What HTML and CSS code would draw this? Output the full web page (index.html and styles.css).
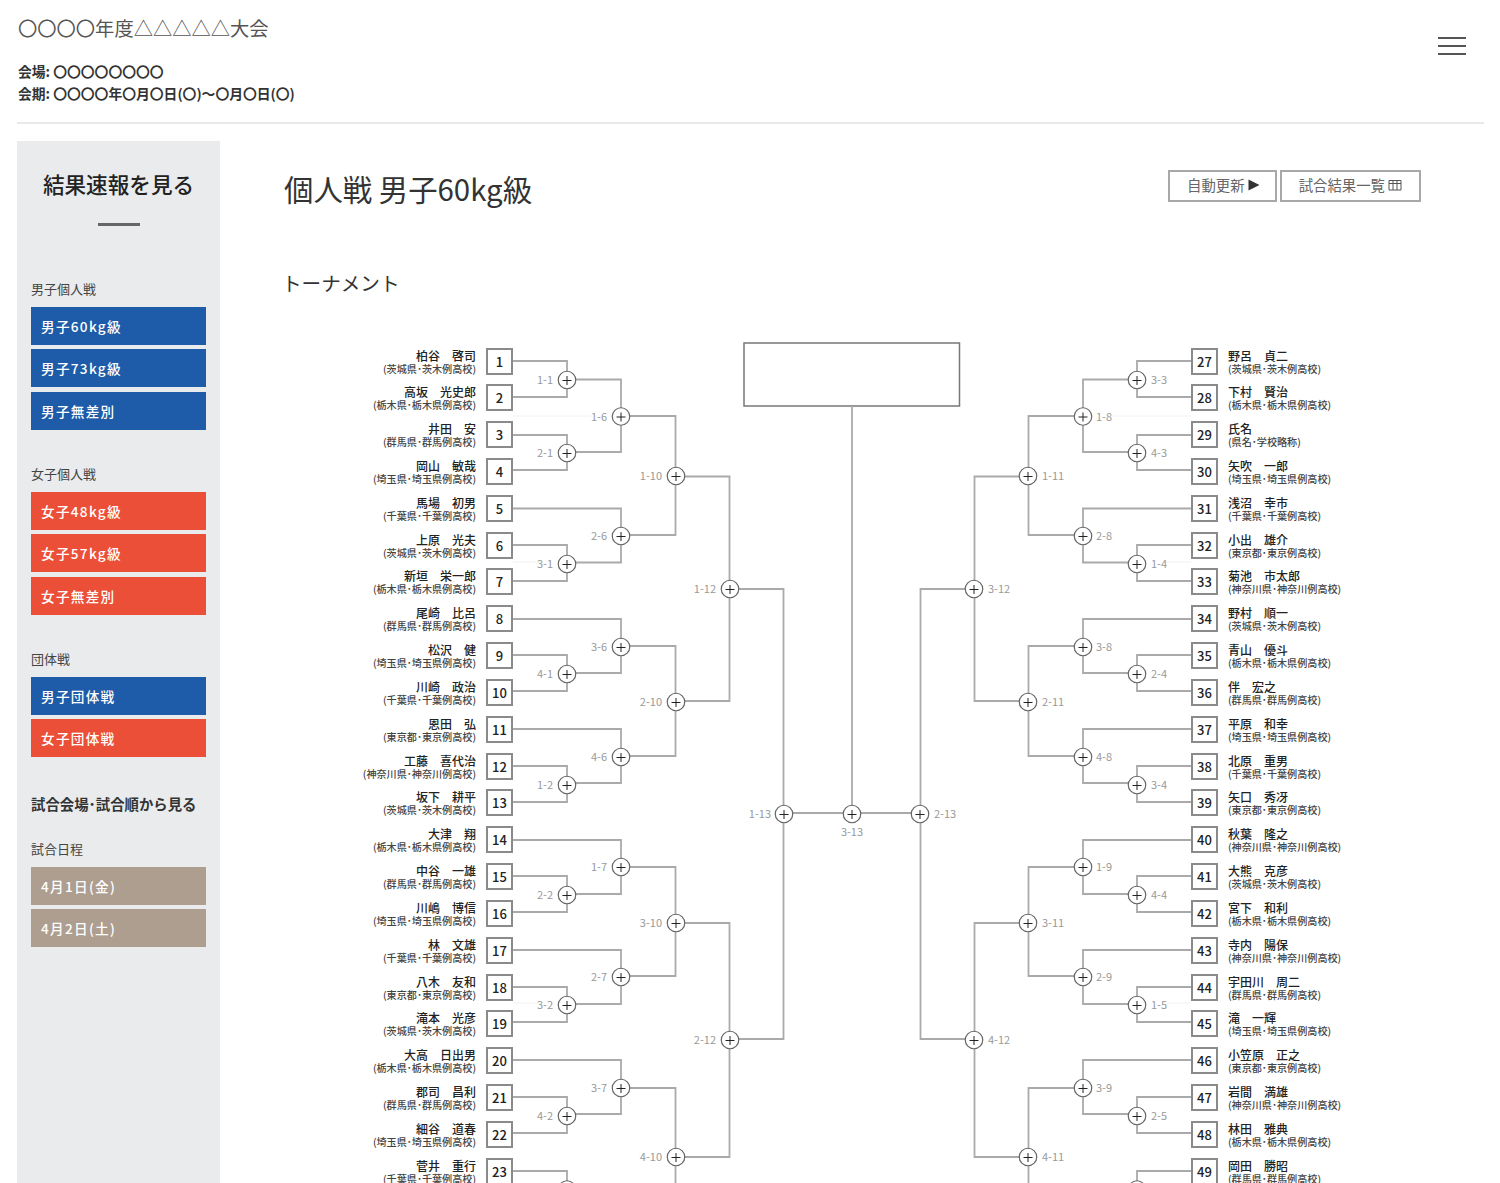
FILE: index.html
```html
<!DOCTYPE html>
<html lang="ja">
<head>
  <meta charset="UTF-8">
  <meta name="viewport" content="width=device-width, initial-scale=1.0">
  <title>〇〇〇〇年度△△△△△大会</title>
  <link rel="stylesheet" href="styles.css">
</head>
<body>
  <header class="site-header">
    <div>
      <p class="site-title">〇〇〇〇年度△△△△△大会</p>
      <p class="site-info">会場: 〇〇〇〇〇〇〇〇</p>
      <p class="site-info">会期: 〇〇〇〇年〇月〇日(〇)～〇月〇日(〇)</p>
    </div>
    <div class="menu-icon"><span></span><span></span><span></span></div>
  </header>

  <div class="layout">
    <aside class="sidebar">
      <h2 class="side-title">結果速報を見る</h2>
      <div class="side-rule"></div>

      <h3 class="side-label">男子個人戦</h3>
      <a class="side-btn blue">男子60kg級</a>
      <a class="side-btn blue">男子73kg級</a>
      <a class="side-btn blue">男子無差別</a>

      <h3 class="side-label">女子個人戦</h3>
      <a class="side-btn red">女子48kg級</a>
      <a class="side-btn red">女子57kg級</a>
      <a class="side-btn red">女子無差別</a>

      <h3 class="side-label">団体戦</h3>
      <a class="side-btn blue">男子団体戦</a>
      <a class="side-btn red">女子団体戦</a>

      <h2 class="side-subtitle">試合会場･試合順から見る</h2>
      <h3 class="side-label date-label">試合日程</h3>
      <a class="side-btn brown">4月1日(金)</a>
      <a class="side-btn brown">4月2日(土)</a>
    </aside>

    <main class="main">
      <div class="page-head">
        <h1>個人戦 男子60kg級</h1>
        <div class="head-buttons">
          <a class="head-btn">自動更新
            <svg width="12" height="12" viewBox="0 0 12 12"><polygon points="0.5,0.5 11.5,6 0.5,11.5" fill="#333"/></svg>
          </a>
          <a class="head-btn">試合結果一覧
            <svg width="14" height="12" viewBox="0 0 14 12" fill="none" stroke="#555"><path d="M1 1.5H13V11H1ZM1 4.5H13M5 1.5V11M9 1.5V11"/></svg>
          </a>
        </div>
      </div>

      <h2 class="section-title">トーナメント</h2>

      <div class="bracket">
        <div class="entries left">
          <div class="entry"><div class="who"><b>柏谷　啓司</b><small>(茨城県･茨木例高校)</small></div><div class="seed">1</div></div>
          <div class="entry"><div class="who"><b>高坂　光史郎</b><small>(栃木県･栃木県例高校)</small></div><div class="seed">2</div></div>
          <div class="entry"><div class="who"><b>井田　安</b><small>(群馬県･群馬例高校)</small></div><div class="seed">3</div></div>
          <div class="entry"><div class="who"><b>岡山　敏哉</b><small>(埼玉県･埼玉県例高校)</small></div><div class="seed">4</div></div>
          <div class="entry"><div class="who"><b>馬場　初男</b><small>(千葉県･千葉例高校)</small></div><div class="seed">5</div></div>
          <div class="entry"><div class="who"><b>上原　光夫</b><small>(茨城県･茨木例高校)</small></div><div class="seed">6</div></div>
          <div class="entry"><div class="who"><b>新垣　栄一郎</b><small>(栃木県･栃木県例高校)</small></div><div class="seed">7</div></div>
          <div class="entry"><div class="who"><b>尾崎　比呂</b><small>(群馬県･群馬例高校)</small></div><div class="seed">8</div></div>
          <div class="entry"><div class="who"><b>松沢　健</b><small>(埼玉県･埼玉県例高校)</small></div><div class="seed">9</div></div>
          <div class="entry"><div class="who"><b>川崎　政治</b><small>(千葉県･千葉例高校)</small></div><div class="seed">10</div></div>
          <div class="entry"><div class="who"><b>恩田　弘</b><small>(東京都･東京例高校)</small></div><div class="seed">11</div></div>
          <div class="entry"><div class="who"><b>工藤　喜代治</b><small>(神奈川県･神奈川例高校)</small></div><div class="seed">12</div></div>
          <div class="entry"><div class="who"><b>坂下　耕平</b><small>(茨城県･茨木例高校)</small></div><div class="seed">13</div></div>
          <div class="entry"><div class="who"><b>大津　翔</b><small>(栃木県･栃木県例高校)</small></div><div class="seed">14</div></div>
          <div class="entry"><div class="who"><b>中谷　一雄</b><small>(群馬県･群馬例高校)</small></div><div class="seed">15</div></div>
          <div class="entry"><div class="who"><b>川嶋　博信</b><small>(埼玉県･埼玉県例高校)</small></div><div class="seed">16</div></div>
          <div class="entry"><div class="who"><b>林　文雄</b><small>(千葉県･千葉例高校)</small></div><div class="seed">17</div></div>
          <div class="entry"><div class="who"><b>八木　友和</b><small>(東京都･東京例高校)</small></div><div class="seed">18</div></div>
          <div class="entry"><div class="who"><b>滝本　光彦</b><small>(茨城県･茨木例高校)</small></div><div class="seed">19</div></div>
          <div class="entry"><div class="who"><b>大高　日出男</b><small>(栃木県･栃木県例高校)</small></div><div class="seed">20</div></div>
          <div class="entry"><div class="who"><b>郡司　昌利</b><small>(群馬県･群馬例高校)</small></div><div class="seed">21</div></div>
          <div class="entry"><div class="who"><b>細谷　道春</b><small>(埼玉県･埼玉県例高校)</small></div><div class="seed">22</div></div>
          <div class="entry"><div class="who"><b>菅井　重行</b><small>(千葉県･千葉例高校)</small></div><div class="seed">23</div></div>
        </div>

        <svg class="tree" width="678" height="860" viewBox="513 340 678 860">
          <defs>
            <g id="node">
              <circle r="8.75" fill="#fff" stroke="#666" stroke-width="1.2"/>
              <path d="M-4.5 0.5H4.5M0 -4V5" stroke="#222" stroke-width="1" fill="none"/>
            </g>
            <g id="half">
              <path class="faint" d="M513 416H592M513 562H540M513 1003H540"/>
              <path class="line" d="M513 361H567V380M513 397H567V380M567 379.5H621V416M513 435H567V453M513 470H567V453M567 452H621V416M621 416H675.5V476M513 508.5H621V536M513 545H567V564M513 581H567V564M567 562.5H621V536M621 535H675.5V476M676 476.5H729.5V589"/>
              <path class="line" d="M513 619H621V647M513 655H567V674M513 691H567V674M567 673H621V647M621 646H675.5V702M513 729H621V757M513 766H567V785M513 802H567V785M567 783H621V757M621 756H675.5V702M676 701H729.5V589M730 589H783.5V814"/>
              <path class="line" d="M513 840H621V867M513 876H567V895M513 912H567V895M567 894H621V867M621 867H675.5V923M513 950H621V977M513 987H567V1005M513 1022H567V1005M567 1004H621V977M621 976H675.5V923M676 923H729.5V1040M676 1157H729.5V1040M730 1039H783.5V814"/>
              <path class="line" d="M513 1060H621V1088M513 1097H567V1116M513 1133H567V1116M567 1114H621V1088M621 1088H675.5V1200M513 1171H567V1200"/>
              <use href="#node" x="567" y="380"/>
              <use href="#node" x="621" y="416.5"/>
              <use href="#node" x="567" y="453"/>
              <use href="#node" x="676" y="476"/>
              <use href="#node" x="621" y="536"/>
              <use href="#node" x="567" y="564"/>
              <use href="#node" x="730" y="589"/>
              <use href="#node" x="621" y="647"/>
              <use href="#node" x="567" y="674"/>
              <use href="#node" x="676" y="702"/>
              <use href="#node" x="621" y="757"/>
              <use href="#node" x="567" y="785"/>
              <use href="#node" x="784" y="814"/>
              <use href="#node" x="621" y="867"/>
              <use href="#node" x="567" y="895"/>
              <use href="#node" x="676" y="923"/>
              <use href="#node" x="621" y="977"/>
              <use href="#node" x="567" y="1005"/>
              <use href="#node" x="730" y="1040"/>
              <use href="#node" x="621" y="1088"/>
              <use href="#node" x="567" y="1116"/>
              <use href="#node" x="676" y="1157"/>
              <use href="#node" x="567" y="1189.5"/>
            </g>
          </defs>

          <rect class="final" x="744" y="343" width="215.5" height="63"/>
          <path class="line" d="M852 406V814M784 813H920"/>
          <use href="#half"/>
          <use href="#half" transform="translate(1704 0) scale(-1 1)"/>
          <use href="#node" x="852" y="814"/>

          <g class="labels left-labels">
            <text x="553" y="384">1-1</text>
            <text x="607" y="420.5">1-6</text>
            <text x="553" y="457">2-1</text>
            <text x="662" y="480">1-10</text>
            <text x="607" y="540">2-6</text>
            <text x="553" y="568">3-1</text>
            <text x="716" y="593">1-12</text>
            <text x="607" y="651">3-6</text>
            <text x="553" y="678">4-1</text>
            <text x="662" y="706">2-10</text>
            <text x="607" y="761">4-6</text>
            <text x="553" y="789">1-2</text>
            <text x="771" y="818">1-13</text>
            <text x="607" y="871">1-7</text>
            <text x="553" y="899">2-2</text>
            <text x="662" y="927">3-10</text>
            <text x="607" y="981">2-7</text>
            <text x="553" y="1009">3-2</text>
            <text x="716" y="1044">2-12</text>
            <text x="607" y="1092">3-7</text>
            <text x="553" y="1120">4-2</text>
            <text x="662" y="1161">4-10</text>
          </g>
          <text class="labels mid-label" x="852" y="835.5">3-13</text>
          <g class="labels">
            <text x="934" y="818">2-13</text>
            <text x="1151" y="384">3-3</text>
            <text x="1096" y="420.5">1-8</text>
            <text x="1151" y="457">4-3</text>
            <text x="1042" y="480">1-11</text>
            <text x="1096" y="540">2-8</text>
            <text x="1151" y="568">1-4</text>
            <text x="988" y="593">3-12</text>
            <text x="1096" y="651">3-8</text>
            <text x="1151" y="678">2-4</text>
            <text x="1042" y="706">2-11</text>
            <text x="1096" y="761">4-8</text>
            <text x="1151" y="789">3-4</text>
            <text x="1096" y="871">1-9</text>
            <text x="1151" y="899">4-4</text>
            <text x="1042" y="927">3-11</text>
            <text x="1096" y="981">2-9</text>
            <text x="1151" y="1009">1-5</text>
            <text x="988" y="1044">4-12</text>
            <text x="1096" y="1092">3-9</text>
            <text x="1151" y="1120">2-5</text>
            <text x="1042" y="1161">4-11</text>
          </g>
        </svg>

        <div class="entries right">
          <div class="entry"><div class="seed">27</div><div class="who"><b>野呂　貞二</b><small>(茨城県･茨木例高校)</small></div></div>
          <div class="entry"><div class="seed">28</div><div class="who"><b>下村　賢治</b><small>(栃木県･栃木県例高校)</small></div></div>
          <div class="entry"><div class="seed">29</div><div class="who"><b>氏名</b><small>(県名･学校略称)</small></div></div>
          <div class="entry"><div class="seed">30</div><div class="who"><b>矢吹　一郎</b><small>(埼玉県･埼玉県例高校)</small></div></div>
          <div class="entry"><div class="seed">31</div><div class="who"><b>浅沼　幸市</b><small>(千葉県･千葉例高校)</small></div></div>
          <div class="entry"><div class="seed">32</div><div class="who"><b>小出　雄介</b><small>(東京都･東京例高校)</small></div></div>
          <div class="entry"><div class="seed">33</div><div class="who"><b>菊池　市太郎</b><small>(神奈川県･神奈川例高校)</small></div></div>
          <div class="entry"><div class="seed">34</div><div class="who"><b>野村　順一</b><small>(茨城県･茨木例高校)</small></div></div>
          <div class="entry"><div class="seed">35</div><div class="who"><b>青山　優斗</b><small>(栃木県･栃木県例高校)</small></div></div>
          <div class="entry"><div class="seed">36</div><div class="who"><b>伴　宏之</b><small>(群馬県･群馬例高校)</small></div></div>
          <div class="entry"><div class="seed">37</div><div class="who"><b>平原　和幸</b><small>(埼玉県･埼玉県例高校)</small></div></div>
          <div class="entry"><div class="seed">38</div><div class="who"><b>北原　重男</b><small>(千葉県･千葉例高校)</small></div></div>
          <div class="entry"><div class="seed">39</div><div class="who"><b>矢口　秀冴</b><small>(東京都･東京例高校)</small></div></div>
          <div class="entry"><div class="seed">40</div><div class="who"><b>秋葉　隆之</b><small>(神奈川県･神奈川例高校)</small></div></div>
          <div class="entry"><div class="seed">41</div><div class="who"><b>大熊　克彦</b><small>(茨城県･茨木例高校)</small></div></div>
          <div class="entry"><div class="seed">42</div><div class="who"><b>宮下　和利</b><small>(栃木県･栃木県例高校)</small></div></div>
          <div class="entry"><div class="seed">43</div><div class="who"><b>寺内　陽保</b><small>(神奈川県･神奈川例高校)</small></div></div>
          <div class="entry"><div class="seed">44</div><div class="who"><b>宇田川　周二</b><small>(群馬県･群馬例高校)</small></div></div>
          <div class="entry"><div class="seed">45</div><div class="who"><b>滝　一輝</b><small>(埼玉県･埼玉県例高校)</small></div></div>
          <div class="entry"><div class="seed">46</div><div class="who"><b>小笠原　正之</b><small>(東京都･東京例高校)</small></div></div>
          <div class="entry"><div class="seed">47</div><div class="who"><b>岩間　満雄</b><small>(神奈川県･神奈川例高校)</small></div></div>
          <div class="entry"><div class="seed">48</div><div class="who"><b>林田　雅典</b><small>(栃木県･栃木県例高校)</small></div></div>
          <div class="entry"><div class="seed">49</div><div class="who"><b>岡田　勝昭</b><small>(群馬県･群馬例高校)</small></div></div>
        </div>
      </div>
    </main>
  </div>
</body>
</html>
```

FILE: styles.css
```css
body {
  font-family: "Noto Sans CJK JP", "Noto Sans", sans-serif;
  margin: 0;
  padding: 0 16px 0 17px;
  height: 1183px;
  overflow: hidden;
  color: #333;
  background-color: white;
}
h1, h2, h3, p {
  margin: 0;
  font-weight: normal;
}

/* header */
.site-header {
  display: flex;
  justify-content: space-between;
  align-items: flex-start;
  height: 122px;
  border-bottom: 2px solid #e8e8e8;
}
.site-title {
  font-size: 19.3px;
  line-height: 28px;
  margin-top: 14px;
  margin-left: 1px;
  color: #555;
}
.site-info {
  font-size: 13.8px;
  line-height: 22px;
  font-weight: 700;
  margin-left: 1px;
}
.site-title + .site-info {
  margin-top: 18px;
}
.menu-icon {
  width: 28px;
  margin: 37px 18px 0 0;
}
.menu-icon span {
  display: block;
  height: 2px;
  margin-bottom: 6px;
  background-color: #555;
}

.layout {
  display: flex;
  margin-top: 17px;
}

/* sidebar */
.sidebar {
  width: 175px;
  height: 1060px;
  flex-shrink: 0;
  padding: 0 14px;
  background-color: #e9ebed;
}
.side-title {
  margin-top: 27px;
  font-size: 21.6px;
  line-height: 32px;
  font-weight: 500;
  text-align: center;
  color: #222;
}
.side-rule {
  width: 42px;
  height: 3px;
  margin: 23px auto 0;
  background-color: #666;
}
.side-label {
  margin-top: 34px;
  margin-bottom: 8px;
  font-size: 13px;
  line-height: 20px;
  color: #444;
}
.side-rule + .side-label {
  margin-top: 53px;
}
.side-btn {
  display: block;
  height: 38px;
  margin-bottom: 4.4px;
  padding-left: 10px;
  font-size: 13.6px;
  line-height: 38px;
  font-weight: 500;
  letter-spacing: 1.3px;
  color: white;
}
.blue {
  background-color: #1e5ba8;
}
.red {
  background-color: #ec4f37;
}
.brown {
  background-color: #ae9e8f;
}
.side-subtitle {
  margin-top: 36px;
  font-size: 14.4px;
  line-height: 22px;
  font-weight: 700;
  color: #333;
}
.date-label {
  margin-top: 24px;
}

/* main */
.main {
  flex: 1;
  padding-left: 64px;
}
.page-head {
  display: flex;
  justify-content: space-between;
  align-items: flex-start;
  padding-right: 63px;
}
.page-head h1 {
  margin-top: 26px;
  margin-bottom: 1px;
  font-size: 29.4px;
  line-height: 42px;
  color: #333;
}
.head-buttons {
  display: flex;
  gap: 3px;
  margin-top: 29px;
}
.head-btn {
  display: flex;
  align-items: center;
  gap: 3px;
  height: 25px;
  padding: 0 17px 3px;
  border: 2px solid #a8a8a8;
  font-size: 14.4px;
  color: #666;
}
.head-btn:first-child {
  padding-right: 15px;
}
.section-title {
  margin-top: 59px;
  margin-left: -2px;
  font-size: 19.6px;
  line-height: 28px;
  color: #333;
}

/* bracket */
.bracket {
  display: grid;
  grid-template-columns: 229px 678px auto;
  margin-top: 43px;
}
.tree {
  display: block;
}
.tree .line {
  fill: none;
  stroke: #aaa;
  stroke-width: 1.8;
}
.tree .faint {
  fill: none;
  stroke: #f2f2f2;
  stroke-width: 1;
}
.tree .final {
  fill: white;
  stroke: #777;
  stroke-width: 1.5;
}
.labels {
  font-size: 11px;
  fill: #999;
}
.left-labels {
  text-anchor: end;
}
.mid-label {
  text-anchor: middle;
}
.entries {
  padding-top: 2.6px;
}
.entry {
  display: flex;
  align-items: center;
  height: 36.84px;
  gap: 10px;
}
.left .entry {
  justify-content: flex-end;
}
.seed {
  width: 23px;
  height: 23px;
  flex-shrink: 0;
  border: 2px solid #8a8a8a;
  font-size: 13px;
  line-height: 23px;
  font-weight: 500;
  text-align: center;
  color: #222;
  background-color: white;
}
.who {
  padding-top: 2px;
  white-space: nowrap;
}
.left .who {
  text-align: right;
}
.who b {
  display: block;
  font-size: 12px;
  line-height: 13px;
  font-weight: 500;
  color: #222;
}
.who small {
  display: block;
  font-size: 10.1px;
  line-height: 14px;
  font-weight: 500;
  color: #444;
}
```
